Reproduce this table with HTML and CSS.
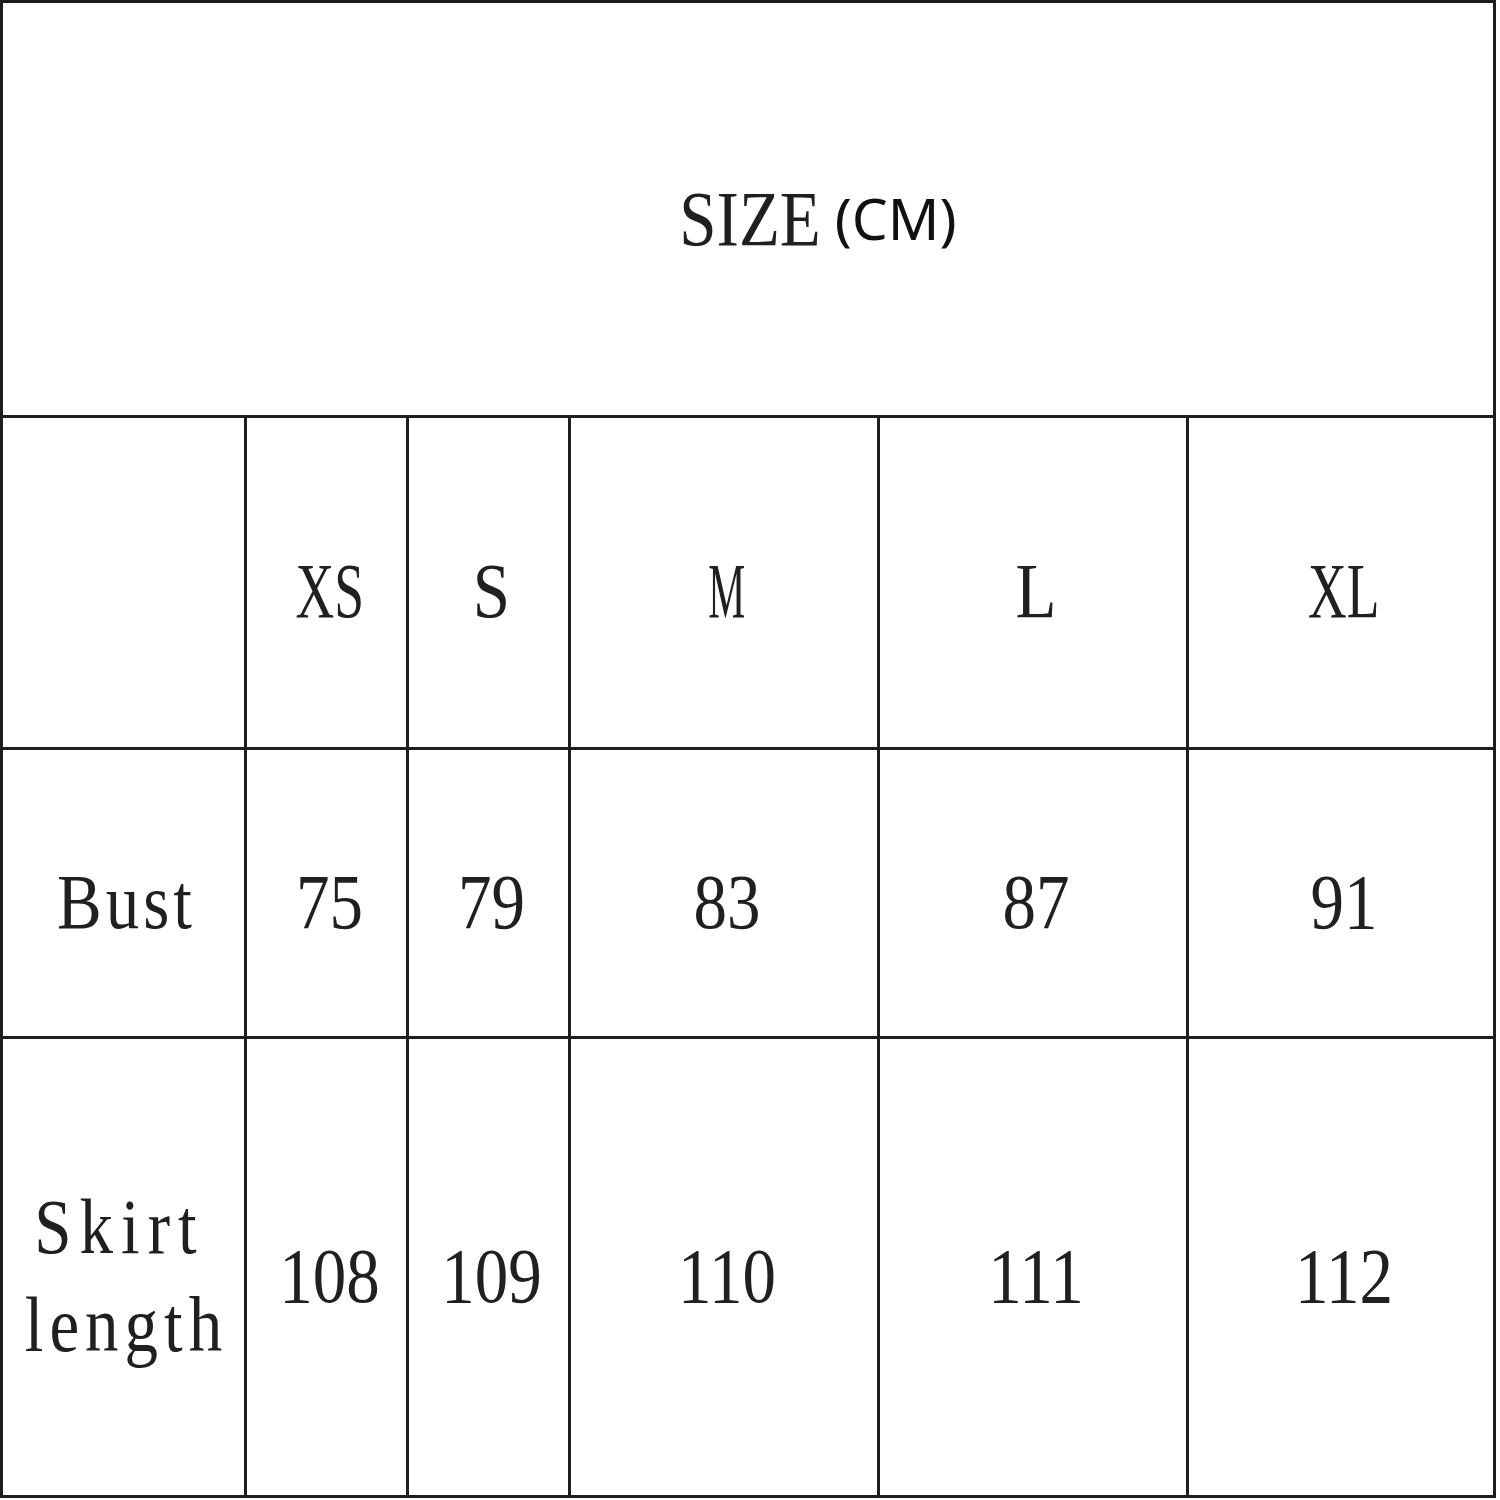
FILE: index.html
```html
<!DOCTYPE html>
<html>
<head>
<meta charset="utf-8">
<link rel="stylesheet" href="styles.css">
</head>
<body>
<div class="chart">
  <div class="cell head"><span class="t">SIZE</span><span class="cm">(CM)</span></div>

  <div class="cell"></div>
  <div class="cell"><span class="t narrow">XS</span></div>
  <div class="cell"><span class="t">S</span></div>
  <div class="cell"><span class="t narrowest">M</span></div>
  <div class="cell"><span class="t">L</span></div>
  <div class="cell"><span class="t narrow">XL</span></div>

  <div class="cell"><span class="t bust">Bust</span></div>
  <div class="cell"><span class="t">75</span></div>
  <div class="cell"><span class="t">79</span></div>
  <div class="cell"><span class="t">83</span></div>
  <div class="cell"><span class="t">87</span></div>
  <div class="cell"><span class="t">91</span></div>

  <div class="cell"><span class="t two"><span class="skirt">Skirt</span><br><span class="length">length</span></span></div>
  <div class="cell"><span class="t">108</span></div>
  <div class="cell"><span class="t">109</span></div>
  <div class="cell"><span class="t">110</span></div>
  <div class="cell"><span class="t">111</span></div>
  <div class="cell"><span class="t">112</span></div>
</div>
</body>
</html>
```

FILE: styles.css
```css
html, body {
  margin: 0;
  padding: 0;
  background: #ffffff;
}

.chart {
  display: grid;
  grid-template-columns: 241px 159px 159px 306px 306px 304px;
  grid-template-rows: 412px 329px 286px 456px;
  gap: 3px;
  padding: 3px;
  width: max-content;
  background: #1e1e1e;
}

.cell {
  background: #ffffff;
  display: flex;
  align-items: center;
  justify-content: center;
  padding-top: 16px;
  padding-left: 6px;
  box-sizing: border-box;
}

.head {
  grid-column: 1 / -1;
  padding-left: 140px;
  padding-top: 18px;
  gap: 14px;
}

.t {
  display: inline-block;
  font-family: "Liberation Serif", "Times New Roman", serif;
  font-size: 67px;
  line-height: 1;
  color: #202020;
  transform: scaleY(1.17);
  text-align: center;
}

.narrow {
  transform: scale(0.8, 1.17);
}

.narrowest {
  transform: scale(0.62, 1.17);
}

.bust {
  letter-spacing: 4px;
}

.two {
  line-height: 84px;
}

.skirt {
  letter-spacing: 8px;
  margin-left: -14px;
}

.length {
  letter-spacing: 6px;
}

.cm {
  font-family: "Noto Sans", "Open Sans", sans-serif;
  font-size: 57px;
  line-height: 1;
  color: #111111;
}
```
